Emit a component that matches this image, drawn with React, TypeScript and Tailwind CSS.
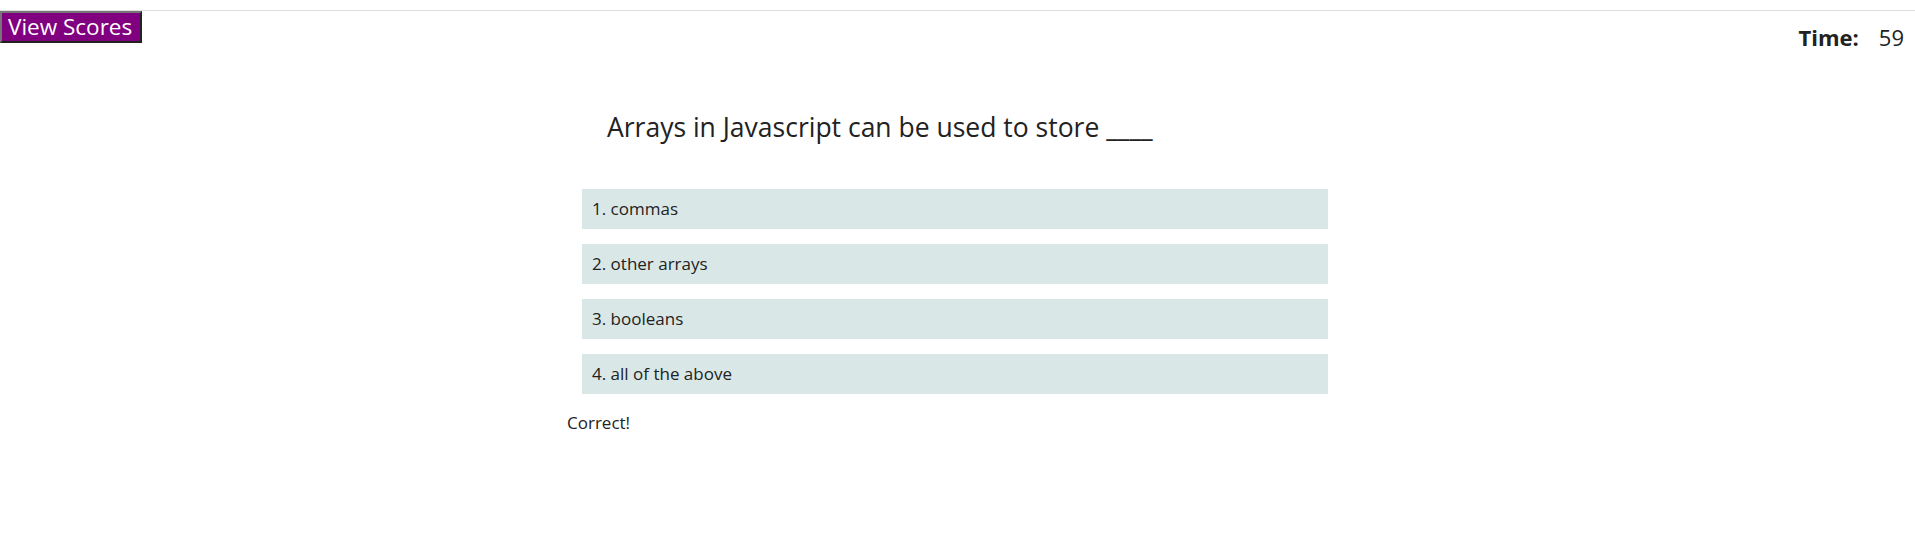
const CHOICES = ["1. commas", "2. other arrays", "3. booleans", "4. all of the above"]

export default function App() {
  return (
    <div className="min-h-screen bg-white text-[#222] font-['Open_Sans',sans-serif]">
      {/* Header */}
      <header className="mt-[10px] flex items-start justify-between border-t border-[#dddddd]">
        <button className="h-8 w-[142px] border-2 border-t-[#767676] border-l-[#767676] border-r-[#222] border-b-[#222] bg-[#800080] px-[6px] text-left text-[22.5px] leading-[28px] whitespace-nowrap text-white">
          View Scores
        </button>
        <div className="flex gap-[20px] pt-[13px] pr-[11px] text-[22px] leading-[26px]">
          <span className="font-bold">Time:</span>
          <span>59</span>
        </div>
      </header>

      {/* Quiz */}
      <main className="mx-auto w-[783px]">
        <h1 className="mt-[59px] pl-[41px] text-[26.5px] leading-[36px]">
          Arrays in Javascript can be used to store ____
        </h1>
        <ul className="mt-[44px] flex flex-col gap-[15px] pl-4">
          {CHOICES.map((c) => (
            <li
              key={c}
              className="flex h-10 w-[746px] items-center bg-[#d9e8e7] px-[10px] text-[17px]"
            >
              {c}
            </li>
          ))}
        </ul>
        <p className="mt-[17px] pl-px text-[17px] leading-[24px]">Correct!</p>
      </main>
    </div>
  )
}
